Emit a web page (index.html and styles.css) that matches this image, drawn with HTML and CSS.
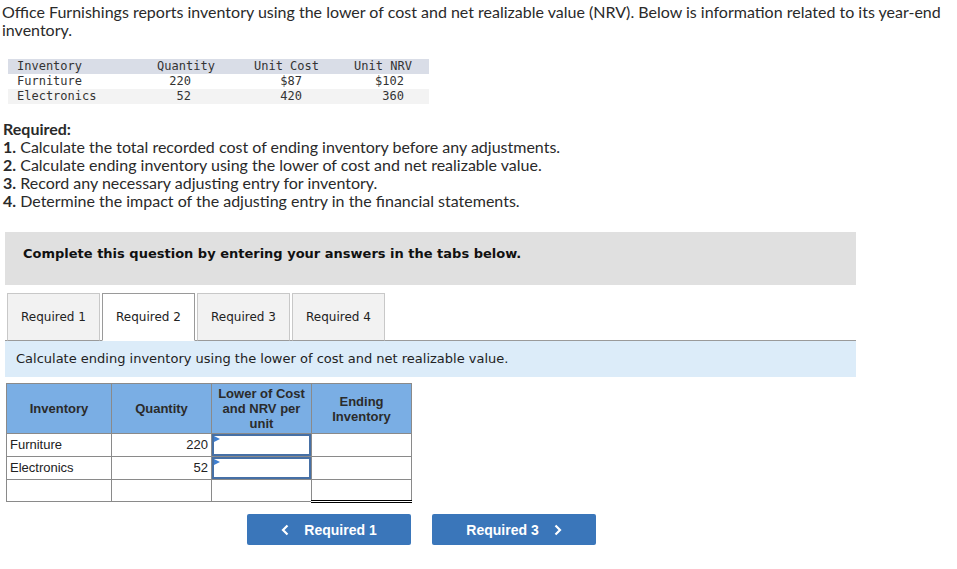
FILE: index.html
```html
<!DOCTYPE html>
<html>
<head>
<meta charset="utf-8">
<link rel="stylesheet" href="styles.css">
</head>
<body>
<div class="page">
  <p class="intro">Office Furnishings reports inventory using the lower of cost and net realizable value (NRV). Below is information related to its year-end inventory.</p>

  <div class="data">
    <div class="drow dhead"><span class="c1">Inventory</span><span class="c2">Quantity</span><span class="c3">Unit Cost</span><span class="c4">Unit NRV</span></div>
    <div class="drow"><span class="c1">Furniture</span><span class="c2 num">220</span><span class="c3 num">$87</span><span class="c4 num">$102</span></div>
    <div class="drow dalt"><span class="c1">Electronics</span><span class="c2 num">52</span><span class="c3 num">420</span><span class="c4 num">360</span></div>
  </div>

  <div class="req">
    <div class="req-title">Required:</div>
    <div><b>1.</b> Calculate the total recorded cost of ending inventory before any adjustments.</div>
    <div><b>2.</b> Calculate ending inventory using the lower of cost and net realizable value.</div>
    <div><b>3.</b> Record any necessary adjusting entry for inventory.</div>
    <div><b>4.</b> Determine the impact of the adjusting entry in the financial statements.</div>
  </div>

  <div class="notice">Complete this question by entering your answers in the tabs below.</div>

  <div class="tabs">
    <div class="tab">Required 1</div>
    <div class="tab active">Required 2</div>
    <div class="tab">Required 3</div>
    <div class="tab">Required 4</div>
  </div>
  <div class="bar">Calculate ending inventory using the lower of cost and net realizable value.</div>

  <table class="grid">
    <thead>
      <tr>
        <th class="w1">Inventory</th>
        <th class="w2">Quantity</th>
        <th class="w3">Lower of Cost<br>and NRV per<br>unit</th>
        <th class="w4">Ending<br>Inventory</th>
      </tr>
    </thead>
    <tbody>
      <tr>
        <td>Furniture</td>
        <td class="num">220</td>
        <td class="inp"><div class="box"><span class="tri"></span></div></td>
        <td></td>
      </tr>
      <tr>
        <td>Electronics</td>
        <td class="num">52</td>
        <td class="inp"><div class="box"><span class="tri"></span></div></td>
        <td></td>
      </tr>
      <tr class="total">
        <td></td>
        <td></td>
        <td></td>
        <td class="tot"></td>
      </tr>
    </tbody>
  </table>

  <div class="nav">
    <button class="btn"><svg class="chev" width="8" height="12" viewBox="0 0 8 12"><path d="M6.5 1.5 L2 6 L6.5 10.5" fill="none" stroke="#fff" stroke-width="2.2"/></svg><span>Required 1</span></button>
    <button class="btn"><span>Required 3</span><svg class="chev" width="8" height="12" viewBox="0 0 8 12"><path d="M1.5 1.5 L6 6 L1.5 10.5" fill="none" stroke="#fff" stroke-width="2.2"/></svg></button>
  </div>
</div>
</body>
</html>
```

FILE: styles.css
```css
* { box-sizing: border-box; }
html, body { margin: 0; padding: 0; background: #fff; }
.page {
  width: 957px;
  padding-top: 3px;
  color: #2a2a2a;
  font-family: Lato, "Liberation Sans", sans-serif;
}
.intro {
  margin: 0;
  padding-left: 2px;
  font-size: 16px;
  line-height: 18px;
}
.data {
  margin: 20px 0 0 8px;
  width: 421px;
  font-family: "DejaVu Sans Mono", "Liberation Mono", monospace;
  font-size: 12px;
  color: #333;
}
.drow {
  display: grid;
  grid-template-columns: 128px 100px 101px 92px;
  line-height: 15px;
  height: 15px;
}
.dhead { background: #d9dde7; }
.dalt { background: #f3f3f3; }
.drow .c1 { padding-left: 9px; }
.dhead span { text-align: center; }
.dhead .c1 { text-align: left; }
.drow .c2.num { text-align: right; padding-right: 45px; }
.drow .c3.num { text-align: right; padding-right: 35px; }
.drow .c4.num { text-align: right; padding-right: 25px; }

.req {
  margin-top: 16px;
  padding-left: 3px;
  font-size: 16px;
  line-height: 18px;
}
.req-title { font-weight: bold; }
.req b { font-weight: bold; }

.notice {
  margin: 22px 0 0 5px;
  width: 851px;
  height: 53px;
  background: #e0e0e0;
  padding: 14px 0 0 18px;
  font-family: "DejaVu Sans", Verdana, sans-serif;
  font-weight: bold;
  font-size: 13px;
  line-height: 16px;
  color: #111;
}

.tabs {
  display: flex;
  gap: 2px;
  margin: 8px 0 -1px 7px;
  position: relative;
  z-index: 1;
}
.tab {
  width: 93px;
  height: 48px;
  background: #f2f2f2;
  border: 1px solid #c8c8c8;
  border-bottom-color: #9a9a9a;
  display: flex;
  align-items: center;
  justify-content: center;
  font-family: "DejaVu Sans", Verdana, sans-serif;
  font-size: 12px;
  color: #222;
}
.tab.active {
  background: #fff;
  border-color: #9a9a9a;
  border-bottom-color: #fff;
}
.bar {
  margin-left: 5px;
  width: 851px;
  height: 37px;
  background: #dcecf9;
  border-top: 1px solid #9a9a9a;
  padding: 10px 0 0 11px;
  font-family: "DejaVu Sans", Verdana, sans-serif;
  font-size: 13px;
  line-height: 16px;
  color: #222;
}

.grid {
  margin: 6px 0 0 6px;
  border-collapse: collapse;
  font-family: "Liberation Sans", Arial, sans-serif;
  font-size: 13px;
  color: #222;
}
.grid th, .grid td {
  border: 1px solid #8a8a8a;
  padding: 0;
}
.grid th {
  background: #7aaee4;
  height: 50px;
  font-weight: bold;
  line-height: 15px;
  color: #2b2b2b;
  text-align: center;
}
.grid .w1 { width: 105px; }
.grid .w2 { width: 100px; }
.grid .w3 { width: 100px; }
.grid .w4 { width: 100px; }
.grid td {
  height: 22px;
  padding: 0 3px;
  line-height: 20px;
}
.grid td.num { text-align: right; }
.grid td.inp { padding: 0; position: relative; }
.box {
  height: 22px;
  border: 2px solid #4670a6;
  position: relative;
}
.tri {
  position: absolute;
  left: 0;
  top: 0;
  width: 0;
  height: 0;
  border-top: 3px solid transparent;
  border-bottom: 3px solid transparent;
  border-left: 6px solid #3f7fd0;
}
.grid tr.total td.tot {
  border-top: 1px solid #000;
  border-bottom: 3px double #000;
}

.nav {
  display: flex;
  gap: 21px;
  margin: 11px 0 0 247px;
}
.btn {
  width: 164px;
  height: 31px;
  background: #3a76ba;
  border: 0;
  border-radius: 2px;
  color: #fff;
  font-family: "Liberation Sans", Arial, sans-serif;
  font-weight: bold;
  font-size: 14px;
  display: flex;
  align-items: center;
  justify-content: center;
  gap: 15px;
  padding: 0;
}
.chev { display: block; }
```
